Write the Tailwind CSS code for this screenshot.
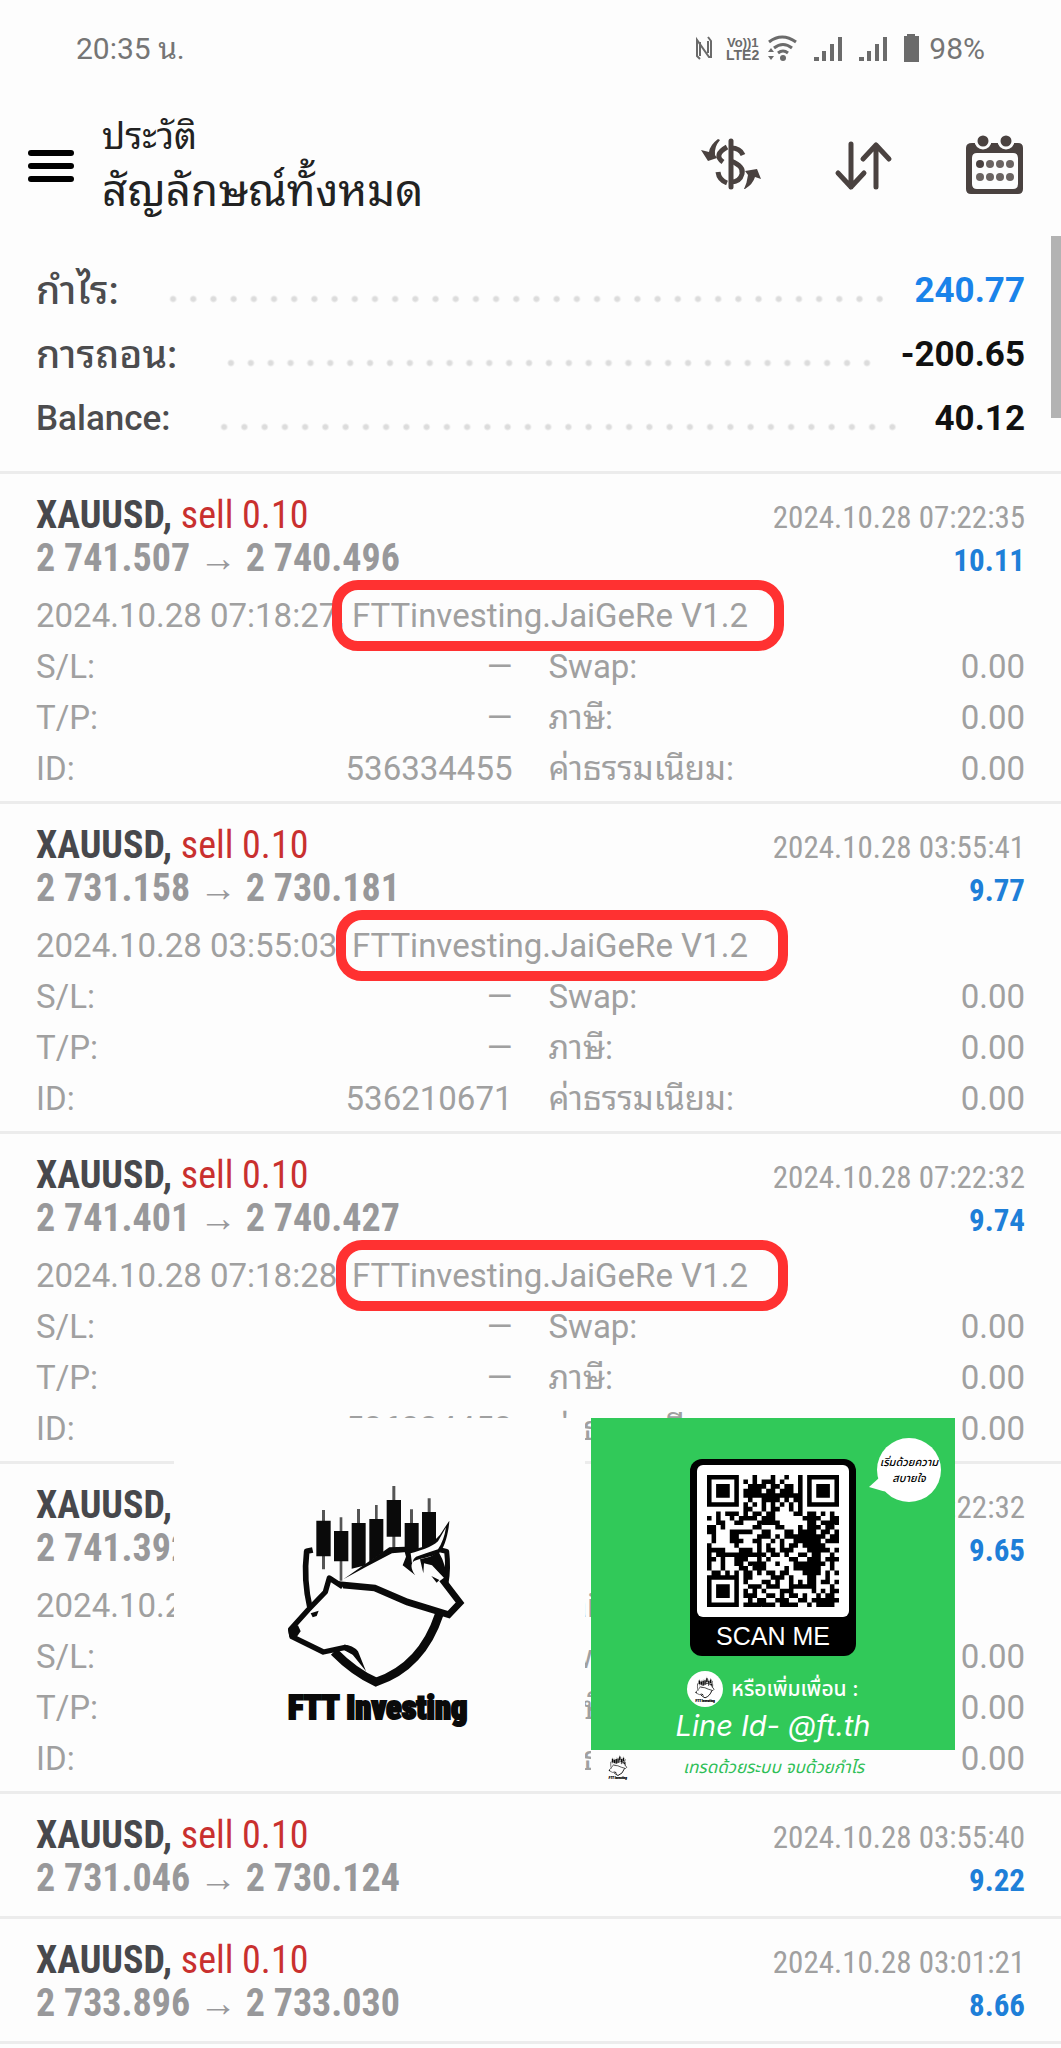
<!DOCTYPE html>
<html lang="th">
<head>
<meta charset="utf-8">
<meta name="viewport" content="width=device-width, initial-scale=1">
<title>ประวัติ</title>
<script src="https://cdn.jsdelivr.net/npm/@tailwindcss/browser@4"></script>
</head>
<body class="bg-[#fdfdfd] font-['Roboto','Noto_Sans_Thai_Looped','Loma','Waree','Garuda','Noto_Sans_Thai',sans-serif] text-[33px] text-[#a0a0a0]">

<svg class="hidden" aria-hidden="true">
  <symbol id="logo" viewBox="0 0 636 780">
    <path d="M156 120h9v178h-9zM209 142h8v190h-8zM261 117h9v60h-9zM315 105h8v60h-8zM367 48h9v188h-9zM420 118h9v60h-9zM473 85h9v60h-9z" fill="#555"/>
    <path fill="#0a0a0a" d="M139 152h43v107h-43zM192 183h43v91h-43zM245 159h42v127l-42 10zM298 147h42v100l-42 28zM350 90h43v110h-43zM404 159h42v85h-42zM456 126h42v90l-42 30z"/>
    <g fill="none" stroke="#0a0a0a" stroke-linejoin="round">
      <path d="M128 240l-18 4q-10 86 10 170" stroke-width="17"/>
      <path d="M512 240l18 4q6 50-2 96" stroke-width="15"/>
      <path d="M508 432Q456 590 318 636Q252 606 192 545" stroke-width="26" stroke-linejoin="miter"/>
      <path d="M516 328L570 398L536 434L412 396L314 354L206 344" stroke-width="20" fill="none" stroke-linejoin="miter"/>
      <path d="M218 350L178 324L166 366L114 420L62 478L66 500L160 546L226 532L256 548" stroke-width="16" fill="#fdfdfd"/>
    </g>
    <g fill="#0a0a0a">
      <path d="M220 328L358 232l50-2 2 16-44 4-80 42z"/>
      <path d="M402 238c48 2 84-14 108-44l28-42c-2 34-12 72-26 94-22 14-48 16-78 26-14 8-12 26 2 44l-38-30 10-26z"/>
      <path fill="#fdfdfd" d="M422 250c30-8 62-18 82-36l24-42q-6 40-24 66-30 10-66 22-14 10-10 36z"/>
      <path d="M450 268l30-8 26-14q24 40 24 86l-44-46-24-6-2 30z"/>
      <path d="M484 318l24 12-8 8z"/>
      <path d="M54 476l30-10 8 18-14 20-20-4z"/>
      <path d="M122 430l24-8-6 16-12 4z"/>
      <path d="M222 524q26 0 42 20l24 60-40-50-26-14z"/>
    </g>
    <text x="54" y="748" fill="#0a0a0a" stroke="#0a0a0a" stroke-width="6" font-size="97" font-weight="900" font-family="Roboto Condensed, Liberation Sans Narrow, sans-serif">FTT Investing</text>
  </symbol>
</svg>

<header>
  <div class="flex h-24 items-center justify-between pl-[76px] pr-[76px] text-[30px] text-[#757575]">
    <span>20:35 น.</span>
    <div class="flex items-center" aria-label="98%">
      <svg class="h-7 w-[156px] overflow-visible" viewBox="0 0 156 28" fill="none" stroke="#6b6b6b" stroke-width="2">
        <path d="M5 25l-3-3V6l12 17h2V7l-3-4M5 8v14M13 7v12"/>
        <g fill="#6b6b6b" stroke="none" font-family="Liberation Sans, sans-serif" font-weight="700" font-size="13">
          <text x="32" y="13">Vo))1</text><text x="31" y="26" font-size="14">LTE2</text>
        </g>
        <path d="M74 8q13-10 27 0M79 14q9-7 18 0M83 19q5-4 10 0" stroke-width="3"/>
        <g fill="#6b6b6b" stroke="none">
          <circle cx="88" cy="24" r="3"/><path d="M73 18l3-4 3 4zM73 22h6l-3 4z"/>
          <path d="M119 23h5v4h-5zM127 17h4v10h-4zM135 10h4v17h-4zM143 3h4v24h-4z"/>
        </g>
      </svg>
      <svg class="ml-2 h-7 w-[62px]" viewBox="0 0 62 28" fill="#6b6b6b">
        <path d="M0 23h5v4h-5zM8 17h4v10h-4zM16 10h4v17h-4zM24 3h4v24h-4z"/>
        <path d="M45 2h3V0h8v2h4v26h-15z"/>
      </svg>
      <span class="ml-2">98%</span>
    </div>
  </div>
  <div class="flex h-[140px] items-start pl-7 pr-[34px] text-[#222]">
    <button type="button" aria-label="เมนู" class="mt-[54px] flex h-8 w-[46px] flex-col justify-between">
      <span class="h-[6px] w-full rounded-sm bg-black"></span><span class="h-[6px] w-full rounded-sm bg-black"></span><span class="h-[6px] w-full rounded-sm bg-black"></span>
    </button>
    <div class="ml-7 mt-[17px] flex-1">
      <p class="text-[36px] leading-[48px]">ประวัติ</p>
      <h1 class="text-[44px] leading-[60px]">สัญลักษณ์ทั้งหมด</h1>
    </div>
    <nav class="mt-[37px] flex gap-[70px]">
      <button type="button" aria-label="สกุลเงิน"><svg class="size-[62px]" viewBox="0 0 62 62" fill="none" stroke="#4a4240" stroke-width="5">
        <path d="M30 8v46" stroke-width="5" stroke-linecap="round"/><path d="M42 22q-3-7-12-7M26 14q-14 8-4 15M30 28q13 5 11 13t-11 8M17 39q1 8 9 11"/>
        <path fill="#4a4240" stroke="none" d="M17 6Q9 12 8 19L0 17l7 11 9-3-2-3q-1-8 5-15zM44 56q8-5 10-12l6 2-4-10-12 2 3 4q-1 8-4 14z"/></svg></button>
      <button type="button" aria-label="เรียงลำดับ"><svg class="size-[62px]" viewBox="0 0 62 62" fill="none" stroke="#4a4240" stroke-width="5" stroke-linecap="round" stroke-linejoin="round">
        <path d="M18 11v43M5 40l13 14 13-14M43 54V12M30 26l13-14 13 14"/></svg></button>
      <button type="button" aria-label="ปฏิทิน"><svg class="size-[62px]" viewBox="0 0 62 62" fill="#4a4240">
        <path fill-rule="evenodd" d="M7 10h46q5 0 5 5v41q0 5-5 5H6q-5 0-5-5V15q0-5 6-5zM12 20q-5 0-5 5v26q0 5 5 5h36q5 0 5-5V25q0-5-5-5z"/>
        <g stroke="#fdfdfd" stroke-width="3"><circle cx="18" cy="8" r="7"/><circle cx="41" cy="8" r="7"/></g>
        <circle cx="15" cy="31" r="4"/><g fill="#6b6462"><circle cx="25" cy="31" r="4"/><circle cx="35" cy="31" r="4"/><circle cx="45" cy="31" r="4"/><circle cx="15" cy="44" r="4"/><circle cx="25" cy="44" r="4"/><circle cx="35" cy="44" r="4"/><circle cx="45" cy="44" r="4"/></g></svg></button>
    </nav>
  </div>
</header>

<main class="relative">
  <div class="absolute right-0 top-0 h-[182px] w-[10px] bg-[#b3b3b3]"></div>

  <dl class="border-b-3 border-[#ececec] px-9 pb-[20px] pt-[23px] text-[35px] font-medium leading-[64px] text-[#4c4c4e]">
    <div class="flex h-16 items-center"><dt class="text-[39px]">กำไร:</dt><dd class="flex flex-1 items-center font-bold text-[#1a83ea]"><span class="ml-11 mr-6 mt-4 h-2 flex-1 bg-[radial-gradient(circle,#dcdcdc_2px,transparent_4px)] bg-[size:20px_8px] bg-repeat-round"></span>240.77</dd></div>
    <div class="flex h-16 items-center"><dt class="text-[39px]">การถอน:</dt><dd class="flex flex-1 items-center font-bold text-[#111]"><span class="ml-11 mr-6 mt-4 h-2 flex-1 bg-[radial-gradient(circle,#dcdcdc_2px,transparent_4px)] bg-[size:20px_8px] bg-repeat-round"></span>-200.65</dd></div>
    <div class="flex h-16 items-center"><dt>Balance:</dt><dd class="flex flex-1 items-center font-bold text-[#111]"><span class="ml-11 mr-8 mt-4 h-2 flex-1 bg-[radial-gradient(circle,#dcdcdc_2px,transparent_4px)] bg-[size:20px_8px] bg-repeat-round"></span>40.12</dd></div>
  </dl>

  <section class="relative">
    <article class="border-b-3 border-[#ececec] px-9 pb-[7px] pt-5">
      <div class="flex h-[43px] items-center justify-between font-['Roboto_Condensed','Liberation_Sans_Narrow',sans-serif] leading-[43px]"><h2 class="text-[38px] font-bold text-[#47484c]">XAUUSD, <span class="font-normal text-[#c9302f]">sell 0.10</span></h2><time class="mt-1 text-[31px]">2024.10.28 07:22:35</time></div>
      <div class="flex h-[43px] items-center justify-between font-['Roboto_Condensed','Liberation_Sans_Narrow',sans-serif] font-bold leading-[43px]"><p class="text-[38px] text-[#98989a]">2 741.507 <span class="text-[38px] font-normal leading-none">→</span> 2 740.496</p><p class="mt-1 text-[31px] text-[#1e7fd8]">10.11</p></div>
      <p class="mt-[10px] whitespace-nowrap leading-[51px]">2024.10.28 07:18:27, <span class="relative">FTTinvesting.JaiGeRe V1.2<span class="absolute -bottom-4 -left-5 -right-9 -top-4 rounded-[26px] border-10 border-[#ff3131]"></span></span></p>
      <dl class="grid grid-cols-2 gap-x-9 leading-[51px]">
        <div class="flex justify-between"><dt>S/L:</dt><dd>—</dd></div><div class="flex justify-between"><dt>Swap:</dt><dd>0.00</dd></div>
        <div class="flex justify-between"><dt>T/P:</dt><dd>—</dd></div><div class="flex h-[51px] justify-between"><dt>ภาษี:</dt><dd>0.00</dd></div>
        <div class="flex justify-between"><dt>ID:</dt><dd>536334455</dd></div><div class="flex h-[51px] justify-between"><dt>ค่าธรรมเนียม:</dt><dd>0.00</dd></div>
      </dl>
    </article>
    <article class="border-b-3 border-[#ececec] px-9 pb-[7px] pt-5">
      <div class="flex h-[43px] items-center justify-between font-['Roboto_Condensed','Liberation_Sans_Narrow',sans-serif] leading-[43px]"><h2 class="text-[38px] font-bold text-[#47484c]">XAUUSD, <span class="font-normal text-[#c9302f]">sell 0.10</span></h2><time class="mt-1 text-[31px]">2024.10.28 03:55:41</time></div>
      <div class="flex h-[43px] items-center justify-between font-['Roboto_Condensed','Liberation_Sans_Narrow',sans-serif] font-bold leading-[43px]"><p class="text-[38px] text-[#98989a]">2 731.158 <span class="text-[38px] font-normal leading-none">→</span> 2 730.181</p><p class="mt-1 text-[31px] text-[#1e7fd8]">9.77</p></div>
      <p class="mt-[10px] whitespace-nowrap leading-[51px]">2024.10.28 03:55:03, <span class="relative">FTTinvesting.JaiGeRe V1.2<span class="absolute -bottom-4 -left-4 -right-10 -top-4 rounded-[26px] border-10 border-[#ff3131]"></span></span></p>
      <dl class="grid grid-cols-2 gap-x-9 leading-[51px]">
        <div class="flex justify-between"><dt>S/L:</dt><dd>—</dd></div><div class="flex justify-between"><dt>Swap:</dt><dd>0.00</dd></div>
        <div class="flex justify-between"><dt>T/P:</dt><dd>—</dd></div><div class="flex h-[51px] justify-between"><dt>ภาษี:</dt><dd>0.00</dd></div>
        <div class="flex justify-between"><dt>ID:</dt><dd>536210671</dd></div><div class="flex h-[51px] justify-between"><dt>ค่าธรรมเนียม:</dt><dd>0.00</dd></div>
      </dl>
    </article>
    <article class="border-b-3 border-[#ececec] px-9 pb-[7px] pt-5">
      <div class="flex h-[43px] items-center justify-between font-['Roboto_Condensed','Liberation_Sans_Narrow',sans-serif] leading-[43px]"><h2 class="text-[38px] font-bold text-[#47484c]">XAUUSD, <span class="font-normal text-[#c9302f]">sell 0.10</span></h2><time class="mt-1 text-[31px]">2024.10.28 07:22:32</time></div>
      <div class="flex h-[43px] items-center justify-between font-['Roboto_Condensed','Liberation_Sans_Narrow',sans-serif] font-bold leading-[43px]"><p class="text-[38px] text-[#98989a]">2 741.401 <span class="text-[38px] font-normal leading-none">→</span> 2 740.427</p><p class="mt-1 text-[31px] text-[#1e7fd8]">9.74</p></div>
      <p class="mt-[10px] whitespace-nowrap leading-[51px]">2024.10.28 07:18:28, <span class="relative">FTTinvesting.JaiGeRe V1.2<span class="absolute -bottom-4 -left-4 -right-10 -top-4 rounded-[26px] border-10 border-[#ff3131]"></span></span></p>
      <dl class="grid grid-cols-2 gap-x-9 leading-[51px]">
        <div class="flex justify-between"><dt>S/L:</dt><dd>—</dd></div><div class="flex justify-between"><dt>Swap:</dt><dd>0.00</dd></div>
        <div class="flex justify-between"><dt>T/P:</dt><dd>—</dd></div><div class="flex h-[51px] justify-between"><dt>ภาษี:</dt><dd>0.00</dd></div>
        <div class="flex justify-between"><dt>ID:</dt><dd>536334453</dd></div><div class="flex h-[51px] justify-between"><dt>ค่าธรรมเนียม:</dt><dd>0.00</dd></div>
      </dl>
    </article>
    <article class="border-b-3 border-[#ececec] px-9 pb-[7px] pt-5">
      <div class="flex h-[43px] items-center justify-between font-['Roboto_Condensed','Liberation_Sans_Narrow',sans-serif] leading-[43px]"><h2 class="text-[38px] font-bold text-[#47484c]">XAUUSD, <span class="font-normal text-[#c9302f]">sell 0.10</span></h2><time class="mt-1 text-[31px]">2024.10.28 07:22:32</time></div>
      <div class="flex h-[43px] items-center justify-between font-['Roboto_Condensed','Liberation_Sans_Narrow',sans-serif] font-bold leading-[43px]"><p class="text-[38px] text-[#98989a]">2 741.392 <span class="text-[38px] font-normal leading-none">→</span> 2 740.427</p><p class="mt-1 text-[31px] text-[#1e7fd8]">9.65</p></div>
      <p class="mt-[10px] whitespace-nowrap leading-[51px]">2024.10.28 07:18:28, FTTinvesting.JaiGeRe V1.2</p>
      <dl class="grid grid-cols-2 gap-x-9 leading-[51px]">
        <div class="flex justify-between"><dt>S/L:</dt><dd>—</dd></div><div class="flex justify-between"><dt>Swap:</dt><dd>0.00</dd></div>
        <div class="flex justify-between"><dt>T/P:</dt><dd>—</dd></div><div class="flex h-[51px] justify-between"><dt>ภาษี:</dt><dd>0.00</dd></div>
        <div class="flex justify-between"><dt>ID:</dt><dd>536334454</dd></div><div class="flex h-[51px] justify-between"><dt>ค่าธรรมเนียม:</dt><dd>0.00</dd></div>
      </dl>
    </article>
    <article class="border-b-3 border-[#ececec] px-9 pb-4 pt-5">
      <div class="flex h-[43px] items-center justify-between font-['Roboto_Condensed','Liberation_Sans_Narrow',sans-serif] leading-[43px]"><h2 class="text-[38px] font-bold text-[#47484c]">XAUUSD, <span class="font-normal text-[#c9302f]">sell 0.10</span></h2><time class="mt-1 text-[31px]">2024.10.28 03:55:40</time></div>
      <div class="flex h-[43px] items-center justify-between font-['Roboto_Condensed','Liberation_Sans_Narrow',sans-serif] font-bold leading-[43px]"><p class="text-[38px] text-[#98989a]">2 731.046 <span class="text-[38px] font-normal leading-none">→</span> 2 730.124</p><p class="mt-1 text-[31px] text-[#1e7fd8]">9.22</p></div>
    </article>
    <article class="border-b-3 border-[#ececec] px-9 pb-4 pt-5">
      <div class="flex h-[43px] items-center justify-between font-['Roboto_Condensed','Liberation_Sans_Narrow',sans-serif] leading-[43px]"><h2 class="text-[38px] font-bold text-[#47484c]">XAUUSD, <span class="font-normal text-[#c9302f]">sell 0.10</span></h2><time class="mt-1 text-[31px]">2024.10.28 03:01:21</time></div>
      <div class="flex h-[43px] items-center justify-between font-['Roboto_Condensed','Liberation_Sans_Narrow',sans-serif] font-bold leading-[43px]"><p class="text-[38px] text-[#98989a]">2 733.896 <span class="text-[38px] font-normal leading-none">→</span> 2 733.030</p><p class="mt-1 text-[31px] text-[#1e7fd8]">8.66</p></div>
    </article>

    <!-- brand panel and contact card floating over the list -->
    <aside class="absolute left-[174px] top-[944px] flex h-[373px] gap-[6px] font-['Inter','Noto_Sans_Thai',sans-serif]">
      <div class="w-[411px] bg-[#fdfdfd] pl-24 pt-[52px]"><svg class="h-[260px] w-[212px]" role="img" aria-label="FTT Investing"><use href="#logo"/></svg></div>
      <div class="flex w-[364px] flex-col bg-[#fdfdfd]">
        <div class="relative flex h-[332px] flex-col items-center bg-[#31c959] pt-[41px] text-white">
          <div class="flex h-[197px] w-[166px] flex-col items-center rounded-xl bg-black pt-[6px]">
            <div class="rounded-md bg-white p-[10px]"><svg id="qr" class="size-[132px]" viewBox="0 0 29 29" role="img" aria-label="QR"><path/></svg></div>
            <p class="font-['Liberation_Sans',sans-serif] text-[25px] leading-[38px]">SCAN ME</p>
          </div>
          <div class="mt-[15px] flex h-9 items-center gap-2 text-[21px] font-medium leading-9"><span class="flex size-9 items-center justify-center rounded-full bg-white"><svg class="h-7 w-6"><use href="#logo"/></svg></span>หรือเพิ่มเพื่อน :</div>
          <p class="text-[29px] italic leading-[38px]">Line Id- @ft.th</p>
          <div class="absolute right-[14px] top-5 h-16 w-[72px]">
            <svg class="absolute inset-0 size-full" viewBox="0 0 72 64" fill="#fff"><circle cx="40" cy="32" r="32"/><path d="M10 40L0 49q12 4 24 6z"/></svg>
            <p class="relative pl-2 pt-4 text-center text-[11px] font-medium italic leading-4 text-black">เริ่มด้วยความ<br>สบายใจ</p>
          </div>
        </div>
        <div class="flex flex-1 items-center pb-2 pl-4 text-[17px] italic leading-8 text-[#2fbf57]"><svg class="h-7 w-[22px]"><use href="#logo"/></svg><p class="ml-[54px]">เทรดด้วยระบบ จบด้วยกำไร</p></div>
      </div>
    </aside>
  </section>
</main>

<script>
const rows = [
"11111110001000100100101111111",
"10000010101011101000101000001",
"10111010011110110110101011101",
"10111010111101101110101011101",
"10111010111111111111101011101",
"10000010010011110101101000001",
"11111110101010101010101111111",
"00000000110010110010100000000",
"00101110101101100001101101010",
"10100101111011100000011110011",
"00110011000111110000001101111",
"11010000001100011000101110110",
"11000111110011000110111101101",
"01000110000111010111111111011",
"01000111001100101001111110111",
"10000010000101001011011111000",
"11110001110101101110001111101",
"10111111111110110100110110010",
"11010011100101000011001110111",
"10010011011110010001111111010",
"10010001101110000101111110010",
"01101010110101101100011110101",
"11111110110000111010001100100",
"10000010100011010010101101101",
"10111010011101110011111100010",
"10111010101010001110000101011",
"10111010111001101011010010110",
"10000010010110011100110111111",
"11111110111111101111001011110"];
document.querySelector('#qr path').setAttribute('d', rows.map((r, y) => [...r].map((c, x) => c === '1' ? `M${x} ${y}h1v1h-1z` : '').join('')).join(''));
</script>
</body>
</html>
